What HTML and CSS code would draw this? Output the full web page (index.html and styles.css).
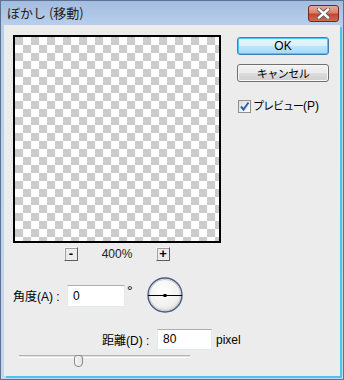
FILE: index.html
```html
<!DOCTYPE html>
<html>
  <head>
    <title>ぼかし (移動)</title>
    <link rel="stylesheet" href="styles.css">
  </head>
  <body>
    <div class="window">
      <div class="titlebar">
        <span class="title">ぼかし (移動)</span>
        <div class="close">
          <svg width="13" height="11" viewBox="0 0 13 11">
            <path d="M2 1.5 L11 9.5 M11 1.5 L2 9.5" stroke="#5a5a5a" stroke-width="4.2" stroke-linecap="square"/>
            <path d="M2 1.5 L11 9.5 M11 1.5 L2 9.5" stroke="#ffffff" stroke-width="2.4" stroke-linecap="square"/>
          </svg>
        </div>
      </div>

      <div class="client">
        <div class="main">
          <div class="preview"></div>
          <div class="side">
            <div class="btn btn-default">OK</div>
            <div class="btn">キャンセル</div>
            <div class="check">
              <span class="box">
                <svg width="11" height="11" viewBox="0 0 11 11">
                  <path d="M2 5.5 L4.5 8.5 L9.5 1.5" fill="none" stroke="#2b5fb4" stroke-width="2"/>
                </svg>
              </span>
              <span class="check-text"><span class="kana">プレビュー</span>(P)</span>
            </div>
          </div>
        </div>

        <div class="zoom">
          <div class="spin">-</div>
          <span class="zoom-value">400%</span>
          <div class="spin">+</div>
        </div>

        <div class="angle">
          <span class="label">角度(A) :</span>
          <div class="field field-angle">0</div>
          <span class="deg">°</span>
          <svg class="dial" width="36" height="36" viewBox="0 0 36 36">
            <defs>
              <radialGradient id="dialFill" cx="0.45" cy="0.35" r="0.7">
                <stop offset="0" stop-color="#ffffff"/>
                <stop offset="0.7" stop-color="#f0f0ee"/>
                <stop offset="1" stop-color="#d4d4d0"/>
              </radialGradient>
            </defs>
            <circle cx="18" cy="18" r="17" fill="url(#dialFill)" stroke="#4d5b82" stroke-width="1.4"/>
            <circle cx="18" cy="18" r="15.6" fill="none" stroke="#c8ccd6" stroke-width="1"/>
            <line x1="1" y1="18.5" x2="35" y2="18.5" stroke="#000" stroke-width="1"/>
            <rect x="16.5" y="17" width="3" height="3" fill="#000"/>
          </svg>
        </div>

        <div class="dist">
          <span class="label">距離(D) :</span>
          <div class="field field-dist">80</div>
          <span class="unit">pixel</span>
        </div>

        <div class="slider">
          <div class="track"></div>
          <div class="thumb"></div>
        </div>
      </div>
    </div>
  </body>
</html>
```

FILE: styles.css
```css
/* General */
body {
  margin: 0;
  font-family: "Liberation Sans", "Noto Sans CJK JP", sans-serif;
  font-size: 12px;
  color: #000;
}

/* Window frame */
.window {
  width: 344px;
  height: 380px;
  box-sizing: border-box;
  border: 1px solid #5f7190;
  background: linear-gradient(#a3bde1, #b8cfea 24px, #c2d7ee);
  display: flex;
  flex-direction: column;
}

.titlebar {
  height: 24px;
  display: flex;
  align-items: flex-start;
  justify-content: space-between;
  padding: 0 4px 0 6px;
}

.title {
  font-family: "Noto Sans CJK JP", sans-serif;
  font-size: 13px;
  line-height: 24px;
  color: #222;
}

.close {
  margin-top: 4px;
  width: 31px;
  height: 17px;
  box-sizing: border-box;
  border: 1px solid #6e2a22;
  border-radius: 3px;
  background: linear-gradient(#e9a996, #d9826c 45%, #c5452f 55%, #cf6a4e);
  display: flex;
  align-items: center;
  justify-content: center;
}

.client {
  flex: 1;
  margin: 0 3px 3px;
  background: #ececec;
  padding: 10px 0 0 9px;
  box-shadow: 2px 2px 0 #4cc3ee;
}

/* Preview + buttons */
.main {
  display: flex;
  gap: 16px;
}

.preview {
  width: 208px;
  height: 208px;
  box-sizing: border-box;
  border: 2px solid #000;
  background: repeating-conic-gradient(#ffffff 0 25%, #cccccc 0 50%) 0 0 / 16px 16px;
}

.side {
  width: 92px;
  padding-top: 2px;
  display: flex;
  flex-direction: column;
}

.btn {
  height: 18px;
  box-sizing: border-box;
  border: 1px solid #707070;
  border-radius: 3px;
  background: linear-gradient(#f2f2f2, #ebebeb 50%, #dddddd 50%, #cfcfcf);
  font-family: "Noto Sans CJK JP", sans-serif;
  font-size: 11px;
  line-height: 16px;
  letter-spacing: -0.5px;
  text-align: center;
  box-shadow: inset 0 0 0 1px #f8f8f8;
}

.btn + .btn {
  margin-top: 9px;
}

.btn-default {
  border-color: #3c7fb1;
  background: linear-gradient(#eaf6fd, #d9f0fc 50%, #bee6fd 50%, #a7d9f5);
  box-shadow: inset 0 0 0 1px #48c8f5;
  font-family: "Liberation Sans", sans-serif;
  font-size: 12px;
  letter-spacing: 0;
}

.check {
  margin-top: 17px;
  padding-left: 1px;
  display: flex;
  align-items: center;
  gap: 2px;
  line-height: 13px;
}

.check-text {
  font-family: "Liberation Sans", sans-serif;
  font-size: 12px;
}

.kana {
  font-family: "Noto Sans CJK JP", sans-serif;
  font-size: 11px;
  letter-spacing: -1px;
}

.box {
  width: 13px;
  height: 13px;
  box-sizing: border-box;
  border: 1px solid #8e8f8f;
  background: linear-gradient(135deg, #dcdcdc, #ffffff);
  display: flex;
  align-items: center;
  justify-content: center;
}

/* Zoom controls */
.zoom {
  width: 208px;
  margin-top: 4px;
  display: flex;
  justify-content: center;
  align-items: center;
}

.spin {
  width: 14px;
  height: 14px;
  box-sizing: border-box;
  border: 1px solid #f4f4f4;
  border-right-color: #5c5c5c;
  border-bottom-color: #5c5c5c;
  background: #ececec;
  box-shadow: 1px 1px 0 #a0a0a0 inset;
  font-size: 13px;
  font-weight: bold;
  line-height: 11px;
  text-align: center;
}

.zoom-value {
  width: 78px;
  text-align: center;
  font-size: 12px;
  line-height: 14px;
  color: #222;
}

/* Angle */
.angle {
  margin-top: 16px;
  height: 36px;
  display: flex;
  align-items: center;
}

.label {
  font-family: "Liberation Sans", "Noto Sans CJK JP", sans-serif;
  font-size: 12px;
  white-space: nowrap;
}

.angle .label {
  width: 54px;
}

.field {
  height: 22px;
  box-sizing: border-box;
  border: 1px solid #e3e9ef;
  border-top-color: #abadb3;
  background: #fff;
  padding-left: 5px;
  font-size: 12px;
  line-height: 20px;
}

.field-angle {
  width: 58px;
  margin-top: 1px;
}

.deg {
  width: 22px;
  padding-left: 2px;
  box-sizing: border-box;
  font-size: 14px;
  align-self: flex-start;
  margin-top: 6px;
}

/* Distance */
.dist {
  margin-top: 16px;
  padding-left: 89px;
  height: 21px;
  display: flex;
  align-items: center;
}

.dist .label {
  width: 55px;
}

.field-dist {
  width: 55px;
  height: 21px;
  line-height: 19px;
}

.unit {
  margin-left: 4px;
  font-size: 12px;
}

/* Slider */
.slider {
  position: relative;
  width: 171px;
  height: 12px;
  margin: 5px 0 0 6px;
}

.track {
  margin-top: 4px;
  height: 1px;
  border-top: 1px solid #b3b3b3;
  border-bottom: 1px solid #ffffff;
  background: #e0e0e0;
}

.thumb {
  position: absolute;
  left: 55px;
  top: 0;
  width: 9px;
  height: 12px;
  box-sizing: border-box;
  border: 1px solid #8a8a8a;
  border-radius: 3px 3px 4px 4px;
  background: linear-gradient(90deg, #f7f7f7, #e2e2e2);
}
```
